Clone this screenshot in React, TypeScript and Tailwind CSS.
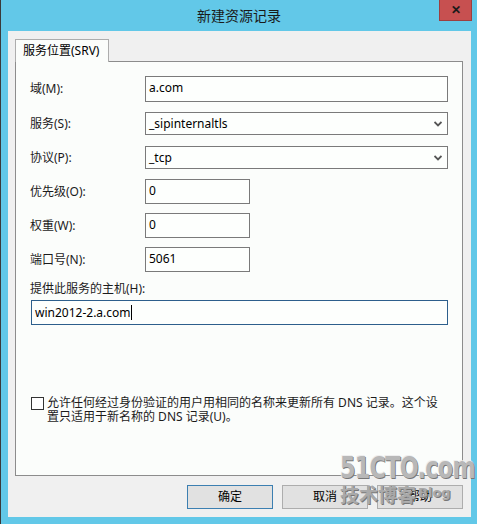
import React from "react";

const font = { fontFamily: '"Noto Sans", "Noto Sans CJK SC", sans-serif' };

function Chevron() {
  return (
    <svg width="8" height="6" viewBox="0 0 8 6" className="shrink-0">
      <path d="M0.5 1 L4 4.5 L7.5 1" fill="none" stroke="#555" strokeWidth="1.8" />
    </svg>
  );
}

function Field({ label, value, h, select, w, mt }: { label: string; value: string; h: string; select?: boolean; w: string; mt: string }) {
  return (
    <div className={`flex items-center ${mt}`}>
      <div className="w-[115px] text-[12px] text-[#1b1b1b]">{label}</div>
      <div className={`${h} ${w} border border-[#7a7a7a] bg-[#fdfffd] flex items-center justify-between pl-[3px] pr-[5px] text-[12px] text-black`}>
        <span className={select ? "" : "self-start pt-[2px]"}>{value}</span>
        {select && <Chevron />}
      </div>
    </div>
  );
}

export default function App() {
  return (
    <div className="w-[477px] h-[524px] bg-[#62c8e8] border-l border-[#3a3a3a] flex flex-col overflow-hidden" style={font}>
      {/* title bar */}
      <div className="h-[31px] relative flex items-center justify-center text-[14px] text-[#1a1a1a] shrink-0">
        <span className="mt-[-1px]">新建资源记录</span>
        <div className="absolute right-[5px] top-0 w-[33px] h-[21px] bg-[#c75050] border border-[#9d3f3f] border-t-0 flex items-center justify-center text-[12px] font-bold text-[#1a1a1a]">
          ✕
        </div>
      </div>
      {/* client */}
      <div className="ml-[7px] mr-[6px] h-[486px] bg-[#f0f0f0] pl-[7px] pr-[8px] pt-[8px] relative">
        {/* tab */}
        <div className="relative z-10 w-[94px] h-[23px] border border-b-0 border-[#adadad] bg-[#fbfdfb] text-[12px] text-black pl-[7px] pt-[2px]">
          服务位置(SRV)
        </div>
        {/* panel */}
        <div className="-mt-px h-[415px] border border-[#8c8c8c] bg-[#fbfdfb] pl-[14px] pt-[14px] flex flex-col">
          <Field label="域(M):" value="a.com" h="h-[26px]" w="w-[303px]" mt="" />
          <Field label="服务(S):" value="_sipinternaltls" h="h-[23px]" w="w-[303px]" mt="mt-[10px]" select />
          <Field label="协议(P):" value="_tcp" h="h-[23px]" w="w-[303px]" mt="mt-[11px]" select />
          <Field label="优先级(O):" value="0" h="h-[25px]" w="w-[105px]" mt="mt-[10px]" />
          <Field label="权重(W):" value="0" h="h-[25px]" w="w-[105px]" mt="mt-[9px]" />
          <Field label="端口号(N):" value="5061" h="h-[25px]" w="w-[105px]" mt="mt-[9px]" />
          <div className="mt-[9px] text-[12px] text-[#1b1b1b] leading-[16px]">提供此服务的主机(H):</div>
          <div className="mt-[3px] ml-px w-[417px] h-[25px] border border-[#2d5f8c] bg-[#fdfffd] text-[12px] text-black pl-[3px] flex items-center">
            <span>win2012-2.a.com</span>
            <span className="w-px h-[15px] bg-black" />
          </div>
          <div className="mt-[71px] ml-px flex items-start gap-[3px]">
            <div className="mt-[1px] w-[13px] h-[13px] border border-[#333] bg-white shrink-0" />
            <div className="text-[12px] leading-[14px] text-[#1b1b1b] w-[400px]">
              允许任何经过身份验证的用户用相同的名称来更新所有 DNS 记录。这个设置只适用于新名称的 DNS 记录(U)。
            </div>
          </div>
        </div>
        {/* buttons */}
        <div className="mt-[9px] flex justify-end gap-[9px]">
          <div className="w-[86px] h-[24px] border border-[#3c7fb1] bg-[#e1e1e1] flex items-center justify-center text-[12px] text-black">确定</div>
          <div className="w-[86px] h-[24px] border border-[#adadad] bg-[#e1e1e1] flex items-center justify-center text-[12px] text-black">取消</div>
          <div className="w-[86px] h-[24px] border border-[#adadad] bg-[#e1e1e1] flex items-center justify-center text-[12px] text-black">帮助</div>
        </div>
        {/* watermark */}
        <div className="absolute left-[332px] top-[421px] w-[124px] flex flex-col leading-none pointer-events-none" style={{ fontFamily: '"DejaVu Sans", "Noto Sans CJK SC", sans-serif' }}>
          <span className="inline-block whitespace-nowrap text-[31px] font-bold text-[#b8b8b8] tracking-[-1px] origin-left scale-x-[0.72]" style={{ textShadow: "1px 1px 0 #777, -1px -1px 0 #eee" }}>51CTO.com</span>
          <div className="flex items-end mt-[3px] whitespace-nowrap">
            <span className="text-[19px] font-bold text-[#a9a9a9]" style={{ textShadow: "1px 1px 0 #777" }}>技术博客</span>
            <span className="text-[13px] font-bold text-[#a9a9a9] mb-[6px] ml-[2px]" style={{ textShadow: "1px 1px 0 #777" }}>Blog</span>
          </div>
        </div>
      </div>
    </div>
  );
}
